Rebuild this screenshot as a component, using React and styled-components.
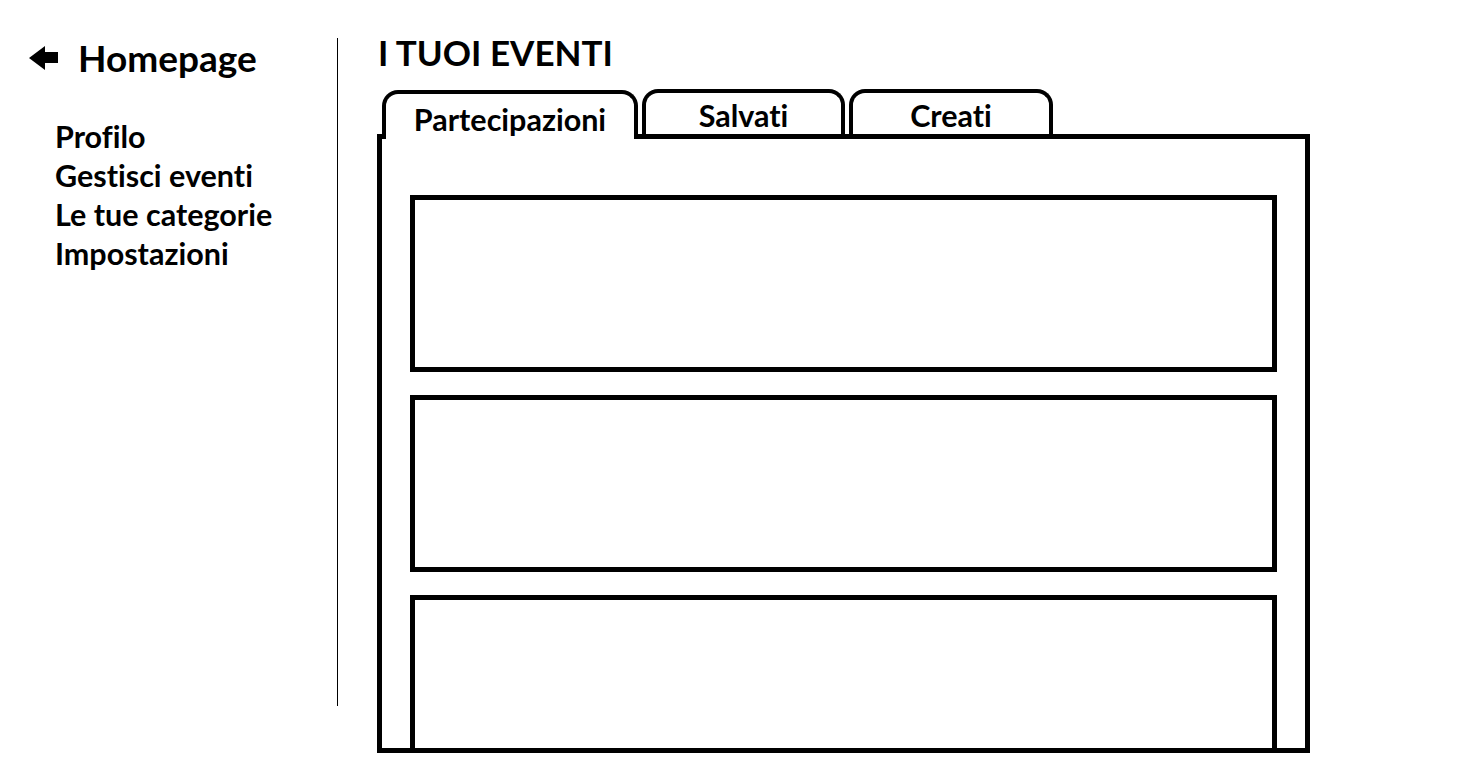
import React, { useState } from "react";
import styled, { createGlobalStyle } from "styled-components";

const GlobalStyle = createGlobalStyle`
  html, body {
    margin: 0;
    padding: 0;
    background: #ffffff;
  }
  body {
    font-family: Lato, "Open Sans", sans-serif;
    font-variant-ligatures: none;
    color: #000000;
  }
`;

const tabs = ["Partecipazioni", "Salvati", "Creati"];
const tabWidths = [256, 203, 204];
const events = [1, 2, 3];

const App = () => {
  const [activeTab, setActiveTab] = useState(0);

  return (
    <Page>
      <GlobalStyle />
      <Sidebar>
        <BackLink href="#">
          <svg width="30" height="24" viewBox="0 0 30 24">
            <polygon points="0,12 16,0 16,6 29,6 29,17 16,17 16,24" fill="#000" />
          </svg>
          <BackLabel>Homepage</BackLabel>
        </BackLink>
        <Menu>
          <MenuItem>Profilo</MenuItem>
          <MenuItem>Gestisci eventi</MenuItem>
          <MenuItem>Le tue categorie</MenuItem>
          <MenuItem>Impostazioni</MenuItem>
        </Menu>
      </Sidebar>

      <Main>
        <Title>I TUOI EVENTI</Title>
        <TabRow>
          {tabs.map((t, i) => (
            <Tab
              key={t}
              $active={i === activeTab}
              $width={tabWidths[i]}
              onClick={() => setActiveTab(i)}
            >
              {t}
            </Tab>
          ))}
        </TabRow>
        <Panel>
          {events.map((e) => (
            <EventCard key={e} />
          ))}
        </Panel>
      </Main>
    </Page>
  );
};

const Page = styled.div`
  display: flex;
  align-items: flex-start;
  height: 779px;
  overflow: hidden;
`;

const Sidebar = styled.aside`
  box-sizing: border-box;
  width: 338px;
  height: 668px;
  margin-top: 38px;
  border-right: 1px solid #000;
`;

const BackLink = styled.a`
  display: flex;
  align-items: center;
  gap: 19px;
  height: 40px;
  padding-left: 29px;
  color: #000;
  text-decoration: none;
`;

const BackLabel = styled.span`
  font-size: 37px;
  font-weight: 700;
  line-height: 40px;
`;

const Menu = styled.ul`
  list-style: none;
  margin: 39px 0 0 0;
  padding: 0 0 0 55px;
`;

const MenuItem = styled.li`
  font-size: 30.5px;
  font-weight: 700;
  line-height: 39px;
`;

const Main = styled.main`
  display: flex;
  flex-direction: column;
  padding: 31px 0 0 39px;
`;

const Title = styled.h1`
  margin: 0 0 16px 1px;
  font-size: 35px;
  font-weight: 700;
  line-height: 42px;
`;

const TabRow = styled.div`
  display: flex;
  align-items: flex-end;
  gap: 4px;
  padding-left: 5px;
  position: relative;
  z-index: 1;
`;

const Tab = styled.button`
  box-sizing: border-box;
  width: ${(p) => p.$width}px;
  height: ${(p) => (p.$active ? 49 : 45)}px;
  margin-bottom: ${(p) => (p.$active ? -5 : 0)}px;
  padding: 0 0 ${(p) => (p.$active ? 4 : 3)}px 0;
  display: flex;
  align-items: flex-end;
  justify-content: center;
  background: #fff;
  border: 4px solid #000;
  border-bottom: none;
  border-radius: 16px 16px 0 0;
  font-family: Lato, "Open Sans", sans-serif;
  font-variant-ligatures: none;
  font-size: 30.5px;
  font-weight: 700;
  line-height: 32px;
  color: #000;
  cursor: pointer;
`;

const Panel = styled.section`
  box-sizing: border-box;
  width: 933px;
  height: 619px;
  padding: 56px 28px 0 28px;
  border: 5px solid #000;
  display: flex;
  flex-direction: column;
  gap: 23px;
  overflow: hidden;
`;

const EventCard = styled.div`
  box-sizing: border-box;
  flex: 0 0 177px;
  border: 5px solid #000;
`;

export default App;
